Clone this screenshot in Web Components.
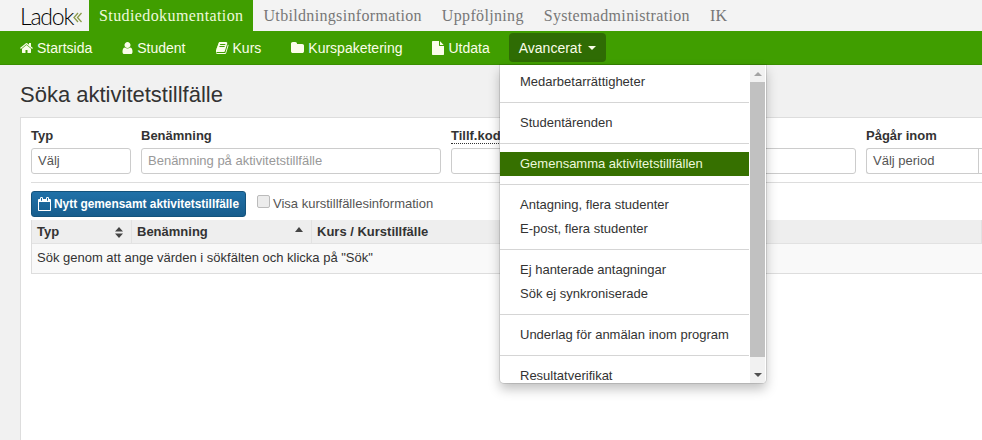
<!DOCTYPE html>
<html lang="sv">
<head>
<meta charset="utf-8">
<title>Ladok</title>
<style>
html, body { margin: 0; padding: 0; height: 100%; overflow: hidden; background: #f1f1f1; }
body { font-family: "Liberation Sans", Arial, sans-serif; font-size: 14px; color: #333; }
</style>
</head>
<body>
<ladok-topbar>
    <top-tab active>Studiedokumentation</top-tab>
    <top-tab>Utbildningsinformation</top-tab>
    <top-tab>Uppföljning</top-tab>
    <top-tab>Systemadministration</top-tab>
    <top-tab>IK</top-tab>
</ladok-topbar>
<ladok-navbar>
    <nav-item icon="home">Startsida</nav-item>
    <nav-item icon="user">Student</nav-item>
    <nav-item icon="book">Kurs</nav-item>
    <nav-item icon="folder">Kurspaketering</nav-item>
    <nav-item icon="file">Utdata</nav-item>
    <nav-item open>Avancerat</nav-item>
</ladok-navbar>
<search-page heading="Söka aktivitetstillfälle"></search-page>
<dropdown-menu></dropdown-menu>

<script>
// viewBox is cropped to the glyph advance, so each icon gets its own width
const ICONS = {
    home: { x: 64, w: 1664, d: 'M1472 992v480q0 26-19 45t-45 19h-384v-384h-256v384h-384q-26 0-45-19t-19-45v-480q0-1 .5-3t.5-3l575-474 575 474q1 2 1 6zm223-69l-62 74q-8 9-21 11h-3q-13 0-21-7l-692-577-692 577q-12 8-24 7-13-2-21-11l-62-74q-8-10-7-23.5t11-21.5l719-599q32-26 76-26t76 26l244 204v-195q0-14 9-23t23-9h192q14 0 23 9t9 23v408l219 182q10 8 11 21.5t-7 23.5z' },
    user: { x: 192, w: 1408, d: 'M1536 1399q0 109-62.5 187t-150.5 78h-854q-88 0-150.5-78t-62.5-187q0-85 8.5-160.5t31.5-152 58.5-131 94-89 134.5-34.5q131 128 313 128t313-128q76 0 134.5 34.5t94 89 58.5 131 31.5 152 8.5 160.5zm-256-887q0 159-112.5 271.5t-271.5 112.5-271.5-112.5-112.5-271.5 112.5-271.5 271.5-112.5 271.5 112.5 112.5 271.5z' },
    book: { x: 64, w: 1664, d: 'M1639 478q40 57 18 129l-275 906q-19 64-76.5 107.5t-122.5 43.5h-923q-77 0-148.5-53.5t-99.5-131.5q-24-67-2-127 0-4 3-27t4-37q1-8-3-21.5t-3-19.5q2-11 8-21t16.5-23.5 16.5-23.5q23-38 45-91.5t30-91.5q3-10 .5-30t-.5-28q3-11 17-28t17-23q21-36 42-92t25-90q1-9-2.5-32t.5-28q4-13 22-30.5t22-22.5q19-26 42.5-84.5t27.5-96.5q1-8-3-25.5t-2-26.5q2-8 9-18t18-23 17-21q8-12 16.5-30.5t15-35 16-36 19.5-32 26.5-23.5 36-11.5 47.5 5.5l-1 3q38-9 51-9h761q74 0 114 56t18 130l-274 906q-36 119-71.5 153.5t-128.5 34.5h-869q-27 0-38 15-11 16-1 43 24 70 144 70h923q29 0 56-15.5t35-41.5l300-987q7-22 5-57 38 15 59 43zm-1064 2q-4 13 2 22.5t20 9.5h608q13 0 25.5-9.5t16.5-22.5l21-64q4-13-2-22.5t-20-9.5h-608q-13 0-25.5 9.5t-16.5 22.5zm-83 256q-4 13 2 22.5t20 9.5h608q13 0 25.5-9.5t16.5-22.5l21-64q4-13-2-22.5t-20-9.5h-608q-13 0-25.5 9.5t-16.5 22.5z' },
    folder: { x: 64, w: 1664, d: 'M1728 608v704q0 92-66 158t-158 66h-1216q-92 0-158-66t-66-158v-960q0-92 66-158t158-66h320q92 0 158 66t66 158v32h672q92 0 158 66t66 158z' },
    file: { x: 128, w: 1536, d: 'M1152 512v-472q22 14 36 28l408 408q14 14 28 36h-472zm-128 32q0 40 28 68t68 28h544v1056q0 40-28 68t-68 28h-1344q-40 0-68-28t-28-68v-1600q0-40 28-68t68-28h800v544z' },
    calendar: { x: 64, w: 1664, d: 'M192 1664h1408v-1024h-1408v1024zm384-1216v-288q0-14-9-23t-23-9h-64q-14 0-23 9t-9 23v288q0 14 9 23t23 9h64q14 0 23-9t9-23zm768 0v-288q0-14-9-23t-23-9h-64q-14 0-23 9t-9 23v288q0 14 9 23t23 9h64q14 0 23-9t9-23zm384-64v1280q0 52-38 90t-90 38h-1408q-52 0-90-38t-38-90v-1280q0-52 38-90t90-38h128v-96q0-66 47-113t113-47h64q66 0 113 47t47 113v96h384v-96q0-66 47-113t113-47h64q66 0 113 47t47 113v96h128q52 0 90 38t38 90z' }
};

function icon(name, size) {
    const g = ICONS[name];
    return `<svg width="${size * g.w / 1792}" height="${size}" viewBox="${g.x} 0 ${g.w} 1792" fill="currentColor" aria-hidden="true"><path d="${g.d}"/></svg>`;
}

class LadokTopbar extends HTMLElement {
    constructor() {
        super();
        this.attachShadow({ mode: 'open' });
    }

    connectedCallback() {
        this.shadowRoot.innerHTML = `
            <style>
            :host {
                display: flex;
                height: 31px;
                background: #f3f3f3;
            }
            .logo {
                width: 69px;
                margin-left: 20px;
                display: flex;
                align-items: center;
                font-family: Lato, "Liberation Sans", sans-serif;
                font-weight: 300;
                font-size: 23px;
                letter-spacing: -1.2px;
                color: #000;
            }
            .logo svg { margin-top: 3px; }
            .tabs { display: flex; }
            </style>
            <div class="logo">Ladok<svg width="9" height="11" viewBox="0 0 9 11" fill="none" stroke="#8a9a4a" stroke-width="1.3"><path d="M5 1 1 5.5 5 10M8.5 1 4.5 5.5 8.5 10"/></svg></div>
            <div class="tabs"><slot></slot></div>
        `;
    }
}

class TopTab extends HTMLElement {
    constructor() {
        super();
        this.attachShadow({ mode: 'open' });
    }

    connectedCallback() {
        this.shadowRoot.innerHTML = `
            <style>
            :host {
                display: flex;
                align-items: center;
                padding: 0 10px;
                font-family: "Liberation Serif", serif;
                font-size: 16px;
                letter-spacing: .33px;
                color: #777;
            }
            :host([active]) {
                background: #409e00;
                color: #eef9dc;
                letter-spacing: .4px;
            }
            </style>
            <slot></slot>
        `;
    }
}

class LadokNavbar extends HTMLElement {
    constructor() {
        super();
        this.attachShadow({ mode: 'open' });
    }

    connectedCallback() {
        this.shadowRoot.innerHTML = `
            <style>
            :host {
                display: flex;
                align-items: flex-start;
                gap: 10px;
                height: 34px;
                padding: 2px 0 0 10px;
                box-sizing: border-box;
                background: #409e00;
                border-bottom: 1px solid #3a8f00;
            }
            </style>
            <slot></slot>
        `;
    }
}

class NavItem extends HTMLElement {
    constructor() {
        super();
        this.attachShadow({ mode: 'open' });
    }

    connectedCallback() {
        const name = this.getAttribute('icon');
        this.shadowRoot.innerHTML = `
            <style>
            :host {
                display: flex;
                align-items: center;
                gap: 4px;
                height: 29px;
                padding: 0 10px;
                border-radius: 4px;
                color: #fbfde9;
                font-size: 14px;
            }
            :host([open]) {
                background: #2f6c04;
                margin-left: -1px;
                gap: 6px;
            }
            .caret {
                width: 0;
                height: 0;
                border-top: 4px solid currentColor;
                border-left: 4px solid transparent;
                border-right: 4px solid transparent;
            }
            svg { display: block; }
            </style>
            ${name ? icon(name, 14) : ''}
            <slot></slot>
            ${this.hasAttribute('open') ? '<span class="caret"></span>' : ''}
        `;
    }
}

class SearchPage extends HTMLElement {
    constructor() {
        super();
        this.attachShadow({ mode: 'open' });
    }

    connectedCallback() {
        this.shadowRoot.innerHTML = `
            <style>
            :host {
                display: block;
                padding-left: 20px;
            }
            h1 {
                margin: 0;
                padding-top: 18px;
                height: 34px;
                font-size: 22px;
                line-height: 24px;
                font-weight: 400;
                color: #333;
            }
            .panel {
                height: 340px;
                background: #fff;
                border: 1px solid #ddd;
                border-right: 0;
                padding: 10px 0 0 10px;
                box-sizing: border-box;
                overflow: hidden;
            }
            .fields { display: flex; gap: 10px; }
            hr {
                height: 1px;
                border: 0;
                background: #ddd;
                margin: 8px 0 8px;
            }
            .actions {
                display: flex;
                align-items: flex-start;
                gap: 11px;
                height: 26px;
                margin-bottom: 3px;
            }
            button {
                display: flex;
                align-items: center;
                gap: 3px;
                height: 26px;
                padding: 0 6px;
                border: 1px solid #14537c;
                border-radius: 3px;
                background: linear-gradient(#2071a8, #175d8d);
                color: #fff;
                font: 700 11.9px "Liberation Sans", sans-serif;
            }
            label {
                display: flex;
                align-items: center;
                gap: 3px;
                height: 24px;
                font-size: 13px;
                color: #555;
            }
            input[type=checkbox] {
                appearance: none;
                width: 13px;
                height: 13px;
                margin: -3px 0 0;
                background: #ececec;
                border: 1px solid #bbb;
                border-radius: 2px;
            }
            </style>
            <h1>${this.getAttribute('heading')}</h1>
            <div class="panel">
                <div class="fields">
                    <filter-field label="Typ" value="Välj" style="width:100px"></filter-field>
                    <filter-field label="Benämning" placeholder="Benämning på aktivitetstillfälle" style="width:300px"></filter-field>
                    <filter-field label="Tillf.kod" dotted style="width:140px"></filter-field>
                    <filter-field style="width:255px"></filter-field>
                    <filter-field label="Pågår inom" value="Välj period" addon style="flex:1"></filter-field>
                </div>
                <hr>
                <div class="actions">
                    <button type="button">${icon('calendar', 14)}Nytt gemensamt aktivitetstillfälle</button>
                    <label><input type="checkbox">Visa kurstillfällesinformation</label>
                </div>
                <result-table></result-table>
            </div>
        `;
    }
}

class FilterField extends HTMLElement {
    constructor() {
        super();
        this.attachShadow({ mode: 'open' });
    }

    connectedCallback() {
        const value = this.getAttribute('value');
        const placeholder = this.getAttribute('placeholder');
        this.shadowRoot.innerHTML = `
            <style>
            :host { display: block; flex: none; }
            .label {
                height: 20px;
                line-height: 16px;
                font-size: 13px;
                font-weight: 700;
                color: #333;
            }
            :host([dotted]) .text { border-bottom: 1px dotted #333; }
            .box {
                display: flex;
                height: 26px;
                border: 1px solid #ccc;
                border-radius: 3px;
                box-sizing: border-box;
                background: #fff;
                font-size: 13px;
                line-height: 24px;
            }
            .val { flex: 1; padding: 0 6px; color: #555; white-space: nowrap; }
            .ph { color: #999; }
            :host([addon]) .box { border-right: 0; border-radius: 3px 0 0 3px; }
            :host([addon]) .val { flex: none; width: 111px; box-sizing: border-box; }
            :host([addon]) .add { flex: 1; border-left: 1px solid #ccc; }
            </style>
            <div class="label"><span class="text">${this.getAttribute('label') || ''}</span></div>
            <div class="box">
                <div class="val">${value || (placeholder ? `<span class="ph">${placeholder}</span>` : '')}</div>
                <div class="add"></div>
            </div>
        `;
    }
}

class ResultTable extends HTMLElement {
    constructor() {
        super();
        this.attachShadow({ mode: 'open' });
    }

    connectedCallback() {
        this.shadowRoot.innerHTML = `
            <style>
            :host { display: block; border: 1px solid #ddd; border-width: 0 0 1px 1px; font-size: 13px; }
            .head {
                display: grid;
                grid-template-columns: 100px 180px 1fr;
                height: 24px;
                background: #eee;
                font-weight: 700;
                color: #333;
                line-height: 23px;
                border-bottom: 1px solid #e2e2e2;
                box-sizing: border-box;
            }
            .head div {
                position: relative;
                padding: 0 5px;
                border-right: 1px solid #e2e2e2;
            }
            .sort { position: absolute; right: 8px; top: 7px; display: block; }
            .row {
                height: 29px;
                line-height: 27px;
                padding-left: 5px;
                background: #f9f9f9;
                color: #333;
            }
            </style>
            <div class="head">
                <div>Typ<svg class="sort" width="8" height="11" viewBox="0 0 8 11" fill="#444"><path d="M4 0 8 4.4H0zM0 6.6H8L4 11z"/></svg></div>
                <div>Benämning<svg class="sort" width="8" height="5" viewBox="0 0 8 5" fill="#444"><path d="M4 0 8 5H0z"/></svg></div>
                <div>Kurs / Kurstillfälle</div>
            </div>
            <div class="row">Sök genom att ange värden i sökfälten och klicka på "Sök"</div>
        `;
    }
}

class DropdownMenu extends HTMLElement {
    constructor() {
        super();
        this.attachShadow({ mode: 'open' });
    }

    connectedCallback() {
        const groups = [
            ['Medarbetarrättigheter'],
            ['Studentärenden'],
            ['*Gemensamma aktivitetstillfällen'],
            ['Antagning, flera studenter', 'E-post, flera studenter'],
            ['Ej hanterade antagningar', 'Sök ej synkroniserade'],
            ['Underlag för anmälan inom program'],
            ['Resultatverifikat']
        ];
        const list = groups.map(group => group.map(text => {
            const active = text.startsWith('*');
            return `<a class="${active ? 'active' : ''}">${active ? text.slice(1) : text}</a>`;
        }).join('')).join('<i></i>');
        this.shadowRoot.innerHTML = `
            <style>
            :host {
                position: absolute;
                left: 500px;
                top: 65px;
                width: 266px;
                height: 318px;
                display: flex;
                background: #fff;
                box-sizing: border-box;
                border-radius: 0 0 4px 4px;
                box-shadow: 0 0 0 1px rgba(0,0,0,.1), 0 6px 12px rgba(0,0,0,.25);
                overflow: hidden;
                font-size: 13px;
                color: #333;
            }
            .list {
                width: 249px;
                flex: none;
                padding-top: 5px;
                overflow: hidden;
            }
            a {
                display: block;
                height: 24px;
                line-height: 23px;
                padding-left: 20px;
                white-space: nowrap;
            }
            a.active {
                background: #367000;
                color: #eef9dc;
            }
            i {
                display: block;
                height: 1px;
                background: #d5d5d5;
                margin: 8px 0;
            }
            .bar {
                margin: 0 1px;
                flex: 1;
                background: #f1f1f1;
                display: flex;
                flex-direction: column;
            }
            .btn { height: 17px; display: flex; align-items: center; justify-content: center; }
            .thumb { flex: 1; background: #c1c1c1; margin-bottom: 9px; }
            .btn b { width: 0; height: 0; border-left: 4px solid transparent; border-right: 4px solid transparent; }
            .up b { border-bottom: 4px solid #a3a3a3; }
            .down b { border-top: 4px solid #505050; }
            </style>
            <div class="list">${list}</div>
            <div class="bar">
                <div class="btn up"><b></b></div>
                <div class="thumb"></div>
                <div class="btn down"><b></b></div>
            </div>
        `;
    }
}

customElements.define('ladok-topbar', LadokTopbar);
customElements.define('top-tab', TopTab);
customElements.define('ladok-navbar', LadokNavbar);
customElements.define('nav-item', NavItem);
customElements.define('search-page', SearchPage);
customElements.define('filter-field', FilterField);
customElements.define('result-table', ResultTable);
customElements.define('dropdown-menu', DropdownMenu);
</script>
</body>
</html>
